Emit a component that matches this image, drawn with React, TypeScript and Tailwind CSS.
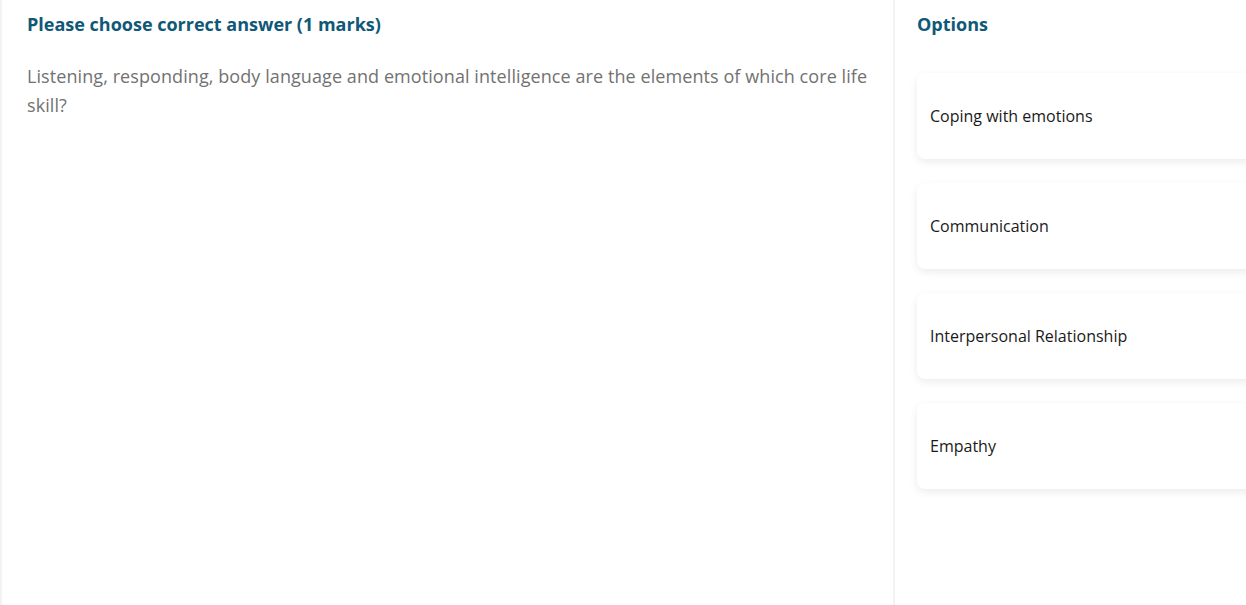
const options = [
  "Coping with emotions",
  "Communication",
  "Interpersonal Relationship",
  "Empathy",
];

export default function App() {
  return (
    <div
      className="flex h-[605px] w-[1246px] overflow-hidden bg-white"
      style={{ fontFamily: '"Open Sans", "Noto Sans", sans-serif' }}
    >
      {/* QUESTION */}
      <div className="w-[895px] shrink-0 border-l-2 border-r-2 border-[#f1f3f5] pl-[25px] pr-[24px] pt-[12px]">
        <h2 className="text-lg font-bold leading-6 text-[#0f5877]">
          Please choose correct answer (1 marks)
        </h2>
        <p className="mt-[26px] text-lg leading-[29px] tracking-[0.08px] text-[#727272]">
          Listening, responding, body language and emotional intelligence are the elements of which core life skill?
        </p>
      </div>

      {/* OPTIONS */}
      <div className="shrink-0 w-[420px] pl-[22px] pt-[12px]">
        <h3 className="text-lg font-bold leading-6 text-[#0f5877]">Options</h3>
        <div className="mt-[37px] flex flex-col gap-6">
          {options.map((o) => (
            <div
              key={o}
              className="flex h-[86px] items-center rounded-lg bg-white px-[13px] text-base text-[#1a1a1a] shadow-[0_3px_8px_rgba(0,0,0,0.08)]"
            >
              {o}
            </div>
          ))}
        </div>
      </div>
    </div>
  );
}
